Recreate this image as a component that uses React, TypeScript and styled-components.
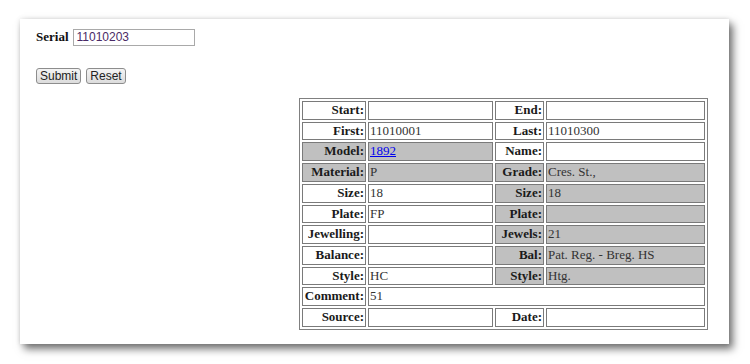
import styled, { createGlobalStyle } from 'styled-components';
import { Fragment } from 'react';

const GlobalStyle = createGlobalStyle`
    body {
        margin: 0;
        background: #fff;
        font-family: "Liberation Serif", "Times New Roman", serif;
    }
`
const Page = styled.div`
    padding: 19px 21px 20px 20px;
`
const Card = styled.section`
    height: 325px;
    background: #fff;
    box-shadow: 0 0 5px rgba(0, 0, 0, 0.12), 4px 5px 8px rgba(0, 0, 0, 0.55);
    padding: 9px 21px 0 16px;
    box-sizing: border-box;
`
const SerialRow = styled.div`
    display: flex;
    align-items: center;
    gap: 4px;
    height: 18px;
`
const SerialLabel = styled.label`
    font-weight: bold;
    font-size: 13px;
    color: #111;
`
const SerialInput = styled.input`
    width: 122px;
    height: 17px;
    box-sizing: border-box;
    border: 1px solid #a9a9a9;
    padding: 0 3px;
    font-family: "Liberation Sans", Arial, sans-serif;
    font-size: 12px;
    color: #4a2a66;
`
const ButtonRow = styled.div`
    display: flex;
    gap: 5px;
    margin-top: 22px;
`
const Button = styled.button`
    height: 16px;
    padding: 0 3px;
    font-family: "Liberation Sans", Arial, sans-serif;
    font-size: 12px;
    line-height: 14px;
    color: #222;
    border: 1px solid #8d8d8d;
    border-radius: 3px;
    background: linear-gradient(#f4f4f4, #dcdcdc);
`
const TableWrap = styled.div`
    display: flex;
    justify-content: flex-end;
    margin-top: 14px;
`
const InfoTable = styled.table`
    width: 409px;
    border: 1px solid #808080;
    border-spacing: 2px;
    font-size: 13px;
    table-layout: fixed;
`
const Cell = styled.td<{ $label?: boolean; $grey?: boolean }>`
    border: 1px solid #7a7a7a;
    padding: 1px 1px;
    line-height: 14.7px;
    height: 14.7px;
    white-space: nowrap;
    overflow: hidden;
    text-align: ${(p) => (p.$label ? 'right' : 'left')};
    font-weight: ${(p) => (p.$label ? 'bold' : 'normal')};
    color: ${(p) => (p.$label ? '#1a1a1a' : '#333')};
    background: ${(p) => (p.$grey ? '#c0c0c0' : '#fff')};
`
const ModelLink = styled.a`
    color: #0000ee;
    text-decoration: underline;
`

type Pair = { label: string; value?: React.ReactNode; grey?: boolean };

const rows: Pair[][] = [
    [{ label: 'Start:' }, { label: 'End:' }],
    [{ label: 'First:', value: '11010001' }, { label: 'Last:', value: '11010300' }],
    [{ label: 'Model:', value: <ModelLink href="#">1892</ModelLink>, grey: true }, { label: 'Name:' }],
    [{ label: 'Material:', value: 'P', grey: true }, { label: 'Grade:', value: 'Cres. St.,', grey: true }],
    [{ label: 'Size:', value: '18' }, { label: 'Size:', value: '18', grey: true }],
    [{ label: 'Plate:', value: 'FP' }, { label: 'Plate:', grey: true }],
    [{ label: 'Jewelling:' }, { label: 'Jewels:', value: '21', grey: true }],
    [{ label: 'Balance:' }, { label: 'Bal:', value: 'Pat. Reg. - Breg. HS', grey: true }],
    [{ label: 'Style:', value: 'HC' }, { label: 'Style:', value: 'Htg.', grey: true }],
];

export default function App() {
    return (
        <Page>
            <GlobalStyle />
            <Card>
                <SerialRow>
                    <SerialLabel>Serial</SerialLabel>
                    <SerialInput defaultValue="11010203" />
                </SerialRow>
                <ButtonRow>
                    <Button>Submit</Button>
                    <Button>Reset</Button>
                </ButtonRow>
                <TableWrap>
                    <InfoTable>
                        <colgroup>
                            <col style={{ width: 64 }} />
                            <col style={{ width: 125 }} />
                            <col style={{ width: 49 }} />
                            <col />
                        </colgroup>
                        <tbody>
                            {rows.map((row, i) => (
                                <tr key={i}>
                                    {row.map((c, j) => (
                                        <Fragment key={j}>
                                            <Cell $label $grey={c.grey}>{c.label}</Cell>
                                            <Cell $grey={c.grey}>{c.value}</Cell>
                                        </Fragment>
                                    ))}
                                </tr>
                            ))}
                            <tr>
                                <Cell $label>Comment:</Cell>
                                <Cell colSpan={3}>51</Cell>
                            </tr>
                            <tr>
                                <Cell $label>Source:</Cell>
                                <Cell />
                                <Cell $label>Date:</Cell>
                                <Cell />
                            </tr>
                        </tbody>
                    </InfoTable>
                </TableWrap>
            </Card>
        </Page>
    );
}
